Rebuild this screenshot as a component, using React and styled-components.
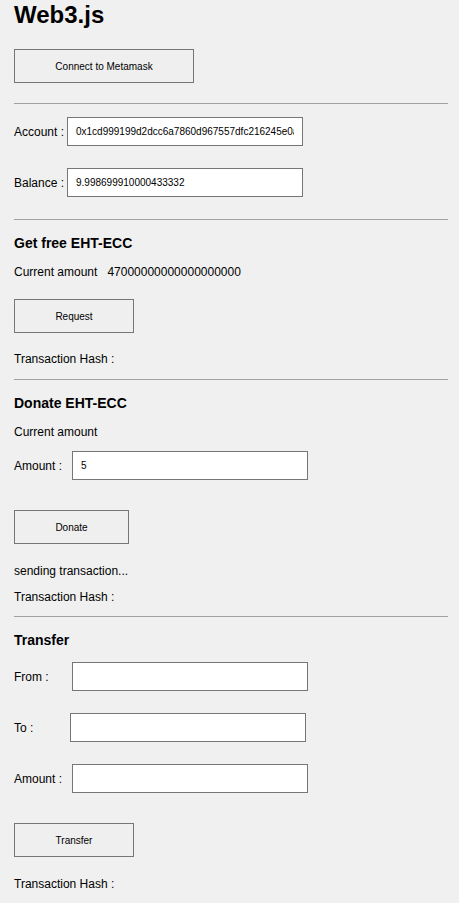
import React from "react";
import styled, { createGlobalStyle } from "styled-components";

const GlobalStyle = createGlobalStyle`
  html, body {
    margin: 0;
    padding: 0;
    background: #f0f0f0;
  }
  body {
    font-family: "Liberation Sans", Arial, sans-serif;
    font-size: 12px;
    color: #000;
  }
`;

const Page = styled.main`
  display: flex;
  flex-direction: column;
  align-items: flex-start;
  padding: 1px 11px 20px 14px;
`;

const Title = styled.h1`
  margin: 0;
  font-size: 24px;
  line-height: 28px;
  font-weight: bold;
`;

const SectionTitle = styled.h2`
  margin: ${(p) => p.$mt}px 0 0;
  font-size: 14px;
  line-height: 16px;
  font-weight: bold;
`;

const Line = styled.p`
  margin: ${(p) => p.$mt}px 0 0;
  line-height: 14px;
  white-space: nowrap;
`;

const Value = styled.span`
  margin-left: 10px;
`;

const ActionButton = styled.button`
  box-sizing: border-box;
  width: ${(p) => p.$w}px;
  height: 34px;
  margin-top: ${(p) => p.$mt}px;
  padding: 0;
  border: 1px solid #767676;
  border-radius: 0;
  background: #efefef;
  color: #000;
  font-family: "Liberation Sans", Arial, sans-serif;
  font-size: 10px;
`;

const Divider = styled.hr`
  align-self: stretch;
  height: 1px;
  margin: ${(p) => p.$mt}px 0 0;
  border: 0;
  background: #a0a0a0;
`;

const FieldRow = styled.label`
  display: flex;
  align-items: center;
  margin-top: ${(p) => p.$mt}px;
`;

const FieldLabel = styled.span`
  width: ${(p) => p.$w}px;
  line-height: 14px;
`;

const TextInput = styled.input`
  box-sizing: border-box;
  width: 236px;
  height: 29px;
  margin: 0;
  padding: 0 8px;
  border: 1px solid #767676;
  border-radius: 0;
  background: #fff;
  color: #000;
  font-family: "Liberation Sans", Arial, sans-serif;
  font-size: 10px;
  outline: none;
`;

export default function App() {
  return (
    <>
      <GlobalStyle />
      <Page>
        <Title>Web3.js</Title>
        <ActionButton $w={180} $mt={20}>Connect to Metamask</ActionButton>
        <Divider $mt={20} />

        <FieldRow $mt={13}>
          <FieldLabel $w={53}>Account :</FieldLabel>
          <TextInput readOnly value="0x1cd999199d2dcc6a7860d967557dfc216245e0a4" />
        </FieldRow>
        <FieldRow $mt={22}>
          <FieldLabel $w={53}>Balance :</FieldLabel>
          <TextInput readOnly value="9.998699910000433332" />
        </FieldRow>
        <Divider $mt={22} />

        <SectionTitle $mt={15}>Get free EHT-ECC</SectionTitle>
        <Line $mt={14}>
          Current amount<Value>47000000000000000000</Value>
        </Line>
        <ActionButton $w={120} $mt={20}>Request</ActionButton>
        <Line $mt={19}>Transaction Hash :</Line>
        <Divider $mt={13} />

        <SectionTitle $mt={15}>Donate EHT-ECC</SectionTitle>
        <Line $mt={14}>Current amount</Line>
        <FieldRow $mt={12}>
          <FieldLabel $w={58}>Amount :</FieldLabel>
          <TextInput defaultValue="5" />
        </FieldRow>
        <ActionButton $w={115} $mt={30}>Donate</ActionButton>
        <Line $mt={20}>sending transaction...</Line>
        <Line $mt={12}>Transaction Hash :</Line>
        <Divider $mt={12} />

        <SectionTitle $mt={15}>Transfer</SectionTitle>
        <FieldRow $mt={14}>
          <FieldLabel $w={58}>From :</FieldLabel>
          <TextInput />
        </FieldRow>
        <FieldRow $mt={22}>
          <FieldLabel $w={56}>To :</FieldLabel>
          <TextInput />
        </FieldRow>
        <FieldRow $mt={22}>
          <FieldLabel $w={58}>Amount :</FieldLabel>
          <TextInput />
        </FieldRow>
        <ActionButton $w={120} $mt={30}>Transfer</ActionButton>
        <Line $mt={20}>Transaction Hash :</Line>
      </Page>
    </>
  );
}
